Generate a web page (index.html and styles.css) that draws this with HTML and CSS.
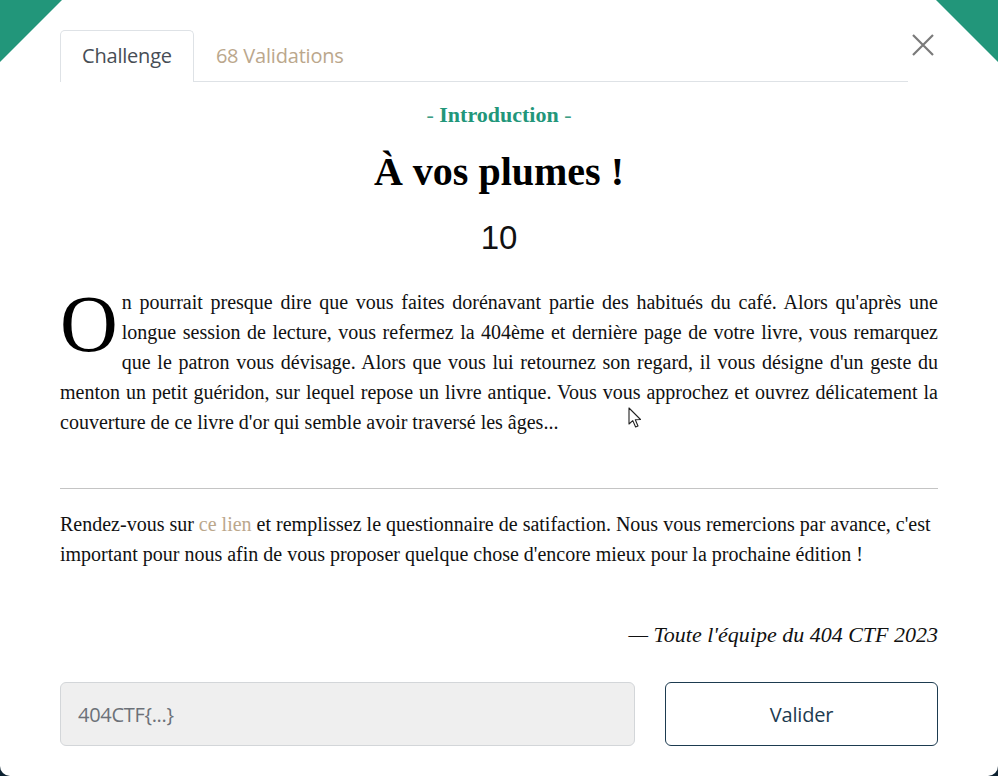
FILE: index.html
```html
<!DOCTYPE html>
<html lang="fr">
<head>
<meta charset="utf-8">
<title>À vos plumes !</title>
<link rel="stylesheet" href="styles.css">
</head>
<body>
<div class="modal">
  <div class="corner corner-left"></div>
  <div class="corner corner-right"></div>
  <div class="header">
    <ul class="tabs">
      <li class="tab active">Challenge</li>
      <li class="tab">68 Validations</li>
    </ul>
    <button class="close" aria-label="Fermer">
      <svg width="22" height="22" viewBox="0 0 22 22"><path d="M1 1L21 21M21 1L1 21" stroke="#7a7a7a" stroke-width="2.2" fill="none"/></svg>
    </button>
  </div>
  <div class="category"><span class="dash">-</span> Introduction <span class="dash">-</span></div>
  <h1 class="title">À vos plumes !</h1>
  <div class="points">10</div>
  <p class="story"><span class="dropcap">O</span>n pourrait presque dire que vous faites dorénavant partie des habitués du café. Alors qu'après une longue session de lecture, vous refermez la 404ème et dernière page de votre livre, vous remarquez que le patron vous dévisage. Alors que vous lui retournez son regard, il vous désigne d'un geste du menton un petit guéridon, sur lequel repose un livre antique. Vous vous approchez et ouvrez délicatement la couverture de ce livre d'or qui semble avoir traversé les âges...</p>
  <hr class="sep">
  <p class="note">Rendez-vous sur <a class="link" href="#">ce lien</a> et remplissez le questionnaire de satifaction. Nous vous remercions par avance, c'est important pour nous afin de vous proposer quelque chose d'encore mieux pour la prochaine édition !</p>
  <p class="signature">— Toute l'équipe du 404 CTF 2023</p>
  <form class="flag-form">
    <input class="flag-input" type="text" placeholder="404CTF{...}">
    <button class="submit" type="button">Valider</button>
  </form>
  <svg class="cursor" width="14" height="22" viewBox="0 0 14 22"><path d="M1 1L1 17L4.8 13.6L7.6 20L10 19L7.3 12.7L12.5 12.5Z" fill="#fff" stroke="#222" stroke-width="1.1" stroke-linejoin="round"/></svg>
</div>
</body>
</html>
```
FILE: styles.css
```css
html, body {
  margin: 0;
  padding: 0;
  background: #0d2231;
}
.modal {
  position: relative;
  width: 998px;
  height: 776px;
  box-sizing: border-box;
  background: #fff;
  border-radius: 0 0 10px 10px;
  padding: 30px 60px 0 60px;
  overflow: hidden;
}
.corner {
  position: absolute;
  top: 0;
  width: 62px;
  height: 62px;
  background: #22967a;
}
.corner-left {
  left: 0;
  clip-path: polygon(0 0, 100% 0, 0 100%);
}
.corner-right {
  right: 0;
  clip-path: polygon(0 0, 100% 0, 100% 100%);
}
.header {
  display: flex;
  align-items: stretch;
}
.tabs {
  flex: 1;
  display: flex;
  list-style: none;
  margin: 0;
  padding: 0;
  border-bottom: 1px solid #dee2e6;
  font-family: "Open Sans", "Noto Sans", sans-serif;
  font-size: 20px;
}
.tab {
  height: 51px;
  box-sizing: border-box;
  padding: 0 21px 2px 21px;
  display: flex;
  align-items: center;
  color: #bba78c;
  border: 1px solid transparent;
  border-bottom: none;
  margin-bottom: -1px;
  letter-spacing: -0.2px;
}
.tab.active {
  color: #474d55;
  background: #fff;
  border-color: #dee2e6;
  border-radius: 5px 5px 0 0;
  height: 52px;
}
.close {
  width: 30px;
  border: none;
  background: none;
  padding: 0;
  display: flex;
  justify-content: center;
  align-items: flex-start;
  padding-top: 4px;
  cursor: pointer;
}
.category {
  margin-top: 21px;
  text-align: center;
  font-family: "Liberation Serif", "Times New Roman", serif;
  font-size: 22px;
  line-height: 24px;
  font-weight: bold;
  color: #22967a;
}
.category .dash {
  font-weight: normal;
  color: #3d9d84;
}
.title {
  margin: 23px 0 0 0;
  text-align: center;
  font-family: "Liberation Serif", "Times New Roman", serif;
  font-size: 40px;
  line-height: 44px;
  font-weight: bold;
  color: #000;
}
.points {
  margin-top: 24px;
  text-align: center;
  font-family: "Liberation Sans", Arial, sans-serif;
  font-size: 33px;
  line-height: 40px;
  color: #111;
}
.story {
  margin: 29px 0 0 0;
  font-family: "Liberation Serif", "Times New Roman", serif;
  font-size: 20px;
  line-height: 30px;
  text-align: justify;
  color: #111;
}
.dropcap {
  float: left;
  font-size: 80px;
  line-height: 80px;
  margin: -3px 4px 0 0;
  color: #000;
}
.sep {
  margin: 51px 0 0 0;
  border: none;
  border-top: 1px solid #c4c4c4;
  height: 0;
}
.note {
  margin: 20px 0 0 0;
  font-family: "Liberation Serif", "Times New Roman", serif;
  font-size: 20px;
  line-height: 30px;
  color: #111;
}
.link {
  color: #bba78c;
  text-decoration: none;
}
.signature {
  margin: 51px 0 0 0;
  text-align: right;
  font-family: "Liberation Serif", "Times New Roman", serif;
  font-style: italic;
  font-size: 22px;
  line-height: 30px;
  color: #111;
}
.flag-form {
  margin-top: 32px;
  display: flex;
  gap: 30px;
}
.flag-input {
  flex: 1;
  height: 64px;
  box-sizing: border-box;
  background: #efefef;
  border: 1px solid #d3d6d9;
  border-radius: 6px;
  padding: 0 17px;
  font-family: "Open Sans", "Noto Sans", sans-serif;
  font-size: 20px;
  color: #495057;
  outline: none;
}
.flag-input::placeholder {
  color: #6c7178;
  letter-spacing: -0.3px;
}
.submit {
  width: 273px;
  height: 64px;
  box-sizing: border-box;
  background: #fff;
  border: 1px solid #1d3b50;
  border-radius: 6px;
  font-family: "Open Sans", "Noto Sans", sans-serif;
  font-size: 20px;
  color: #1d3b50;
  letter-spacing: -0.2px;
}
.cursor {
  position: absolute;
  left: 628px;
  top: 407px;
}
```
